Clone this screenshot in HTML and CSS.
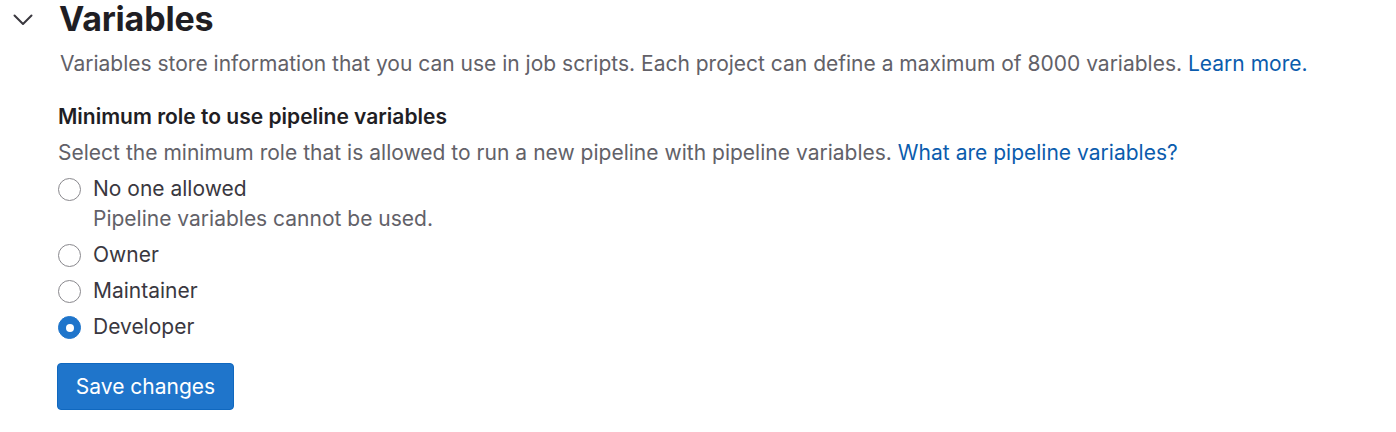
FILE: index.html
```html
<!DOCTYPE html>
<html>
<head>
<meta charset="utf-8">
<link rel="stylesheet" href="styles.css">
</head>
<body>
<section class="settings">
  <header class="head">
    <button class="toggle" aria-label="Collapse">
      <svg width="20" height="12" viewBox="0 0 20 12"><path d="M1.5 1.5L10 10L18.5 1.5" fill="none" stroke="#3a383f" stroke-width="2" stroke-linecap="round" stroke-linejoin="round"/></svg>
    </button>
    <h2 class="title">Variables</h2>
  </header>
  <p class="desc">Variables store information that you can use in job scripts. Each project can define a maximum of 8000 variables. <a href="#" class="link">Learn more.</a></p>
  <form class="form">
    <div class="label">Minimum role to use pipeline variables</div>
    <p class="help">Select the minimum role that is allowed to run a new pipeline with pipeline variables. <a href="#" class="link">What are pipeline variables?</a></p>
    <div class="radios">
      <label class="radio">
        <span class="dot"></span>
        <span class="rtext">No one allowed<span class="rhelp">Pipeline variables cannot be used.</span></span>
      </label>
      <label class="radio"><span class="dot"></span><span class="rtext">Owner</span></label>
      <label class="radio"><span class="dot"></span><span class="rtext">Maintainer</span></label>
      <label class="radio"><span class="dot checked"></span><span class="rtext">Developer</span></label>
    </div>
    <button type="button" class="btn">Save changes</button>
  </form>
</section>
</body>
</html>
```
FILE: styles.css
```css
* { box-sizing: border-box; }
body {
  margin: 0;
  background: #fff;
  font-family: Inter, "Noto Sans", sans-serif;
  color: #3a383f;
}
.head {
  display: flex;
  align-items: center;
  height: 38px;
}
.toggle {
  border: 0;
  background: none;
  padding: 0;
  margin: 2px 0 0 12px;
  width: 22px;
  height: 22px;
  display: flex;
  align-items: center;
  justify-content: center;
}
.title {
  margin: 0 0 0 25px;
  font-size: 34px;
  font-weight: 700;
  color: #1f1e24;
  line-height: 38px;
  letter-spacing: -0.2px;
}
.desc {
  margin: 13px 0 0 60px;
  font-size: 21px;
  line-height: 26px;
  color: #626168;
}
.link { color: #0b5cad; text-decoration: none; }
.form { margin: 27px 0 0 58px; }
.label {
  font-size: 21px;
  font-weight: 600;
  color: #1f1e24;
  line-height: 26px;
}
.help {
  margin: 10px 0 0 0;
  font-size: 21px;
  line-height: 26px;
  color: #626168;
  word-spacing: 0.1px;
}
.radios {
  display: flex;
  flex-direction: column;
  gap: 10px;
  margin-top: 10px;
}
.radio {
  display: flex;
  align-items: flex-start;
  gap: 12px;
  font-size: 21px;
  line-height: 26px;
  color: #3a383f;
}
.dot {
  flex: none;
  width: 23px;
  height: 23px;
  margin-top: 2px;
  border-radius: 50%;
  border: 1.5px solid #89888d;
  background: #fff;
  display: flex;
  align-items: center;
  justify-content: center;
}
.dot.checked {
  border-color: #1f75cb;
  background: #1f75cb;
}
.dot.checked::after {
  content: "";
  width: 8px;
  height: 8px;
  border-radius: 50%;
  background: #fff;
}
.rtext { display: flex; flex-direction: column; }
.rhelp { color: #626168; margin-top: 4px; }
.btn {
  margin-top: 23px;
  margin-left: -1px;
  width: 177px;
  height: 47px;
  border: 1px solid #1068bf;
  border-radius: 4px;
  background: #1f75cb;
  color: #fff;
  font-family: inherit;
  font-size: 21px;
  padding: 0;
}
```
